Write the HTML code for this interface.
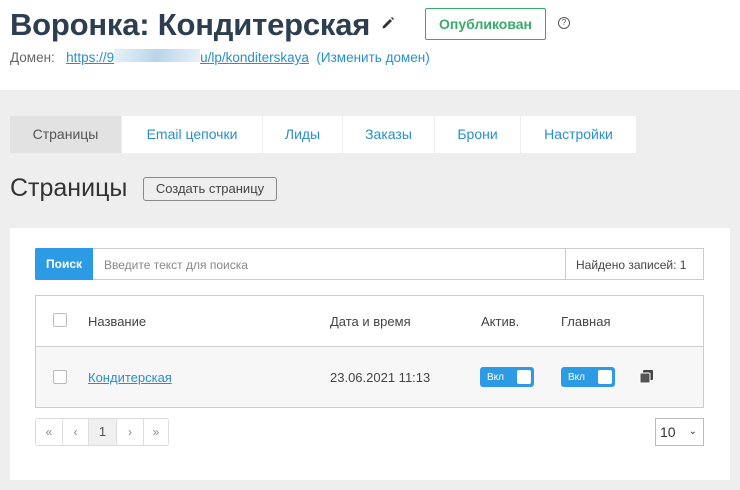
<!DOCTYPE html>
<html><head><meta charset="utf-8"><style>
*{box-sizing:border-box;margin:0;padding:0}
body{width:740px;height:490px;overflow:hidden;background:#eee;font-family:"Liberation Sans","DejaVu Sans",sans-serif;position:relative;color:#333}
.abs{position:absolute}
.top{left:0;top:0;width:740px;height:90px;background:#fff}
h1{position:absolute;left:10px;top:7px;font-size:31px;font-weight:bold;color:#2c3e50;letter-spacing:-0.2px}
a{color:#2a8fc9}
.tab{position:absolute;top:116px;height:37px;background:#fff;color:#2a8fc9;font-size:14px;line-height:37px;text-align:center}
.panel{left:10px;top:228px;width:720px;height:252px;background:#fff}
.tog{position:absolute;width:54px;height:20px;background:#2d9be3;border-radius:3px;color:#fff;font-size:10px;line-height:21px;padding-left:7px}
.tog i{position:absolute;right:3px;top:3px;width:14px;height:14px;background:#fff;border-radius:2px}
.cb{position:absolute;width:14px;height:14px;border:1px solid #bbb;border-radius:2px;background:#fff}
.pg{position:absolute;top:418px;height:28px;border:1px solid #ddd;font-size:12px;color:#888;text-align:center;line-height:26px;background:#fff}
</style></head><body>
<div class="abs top"></div>
<h1>Воронка: Кондитерская</h1>
<svg class="abs" style="left:381px;top:16px" width="14" height="14" viewBox="0 0 14 14"><path d="M2 10 L9 3 L11 5 L4 12 L1.5 12.5 Z" fill="#333"/><path d="M10 2 L11 1 L13 3 L12 4 Z" fill="#333"/></svg>
<div class="abs" style="left:425px;top:8px;width:121px;height:32px;border:1px solid #3aaa6a;border-radius:2px;color:#3aaa6a;font-size:14px;font-weight:bold;line-height:30px;text-align:center">Опубликован</div>
<div class="abs" style="left:558px;top:17px;width:12px;height:12px;border:1px solid #555;border-radius:50%;font-size:8px;line-height:10px;text-align:center;color:#555">?</div>
<div class="abs" style="left:10px;top:49px;font-size:13.5px;color:#666">Домен:&nbsp;&nbsp; <a href="#">https://9<span style="display:inline-block;width:86px;height:13px;background:linear-gradient(100deg,#e8f1f8,#b9d5ea,#e8f1f8)"></span>u/lp/konditerskaya</a>&nbsp; <span style="color:#2a8fc9">(Изменить домен)</span></div>
<div class="tab" style="left:10px;width:111px;background:#e2e2e2;color:#555">Страницы</div>
<div class="tab" style="left:122px;width:140px">Email цепочки</div>
<div class="tab" style="left:263px;width:79px">Лиды</div>
<div class="tab" style="left:343px;width:91px">Заказы</div>
<div class="tab" style="left:435px;width:85px">Брони</div>
<div class="tab" style="left:521px;width:115px">Настройки</div>
<div class="abs" style="left:10px;top:174px;font-size:25px;color:#333">Страницы</div>
<div class="abs" style="left:143px;top:177px;width:134px;height:24px;border:1px solid #888;border-radius:3px;font-size:13px;color:#444;line-height:22px;text-align:center;background:#eee">Создать страницу</div>
<div class="abs panel"></div>
<div class="abs" style="left:35px;top:248px;width:669px;height:32px;border:1px solid #ccc;background:#fff"></div>
<div class="abs" style="left:35px;top:248px;width:58px;height:32px;background:#2d9be3;color:#fff;font-weight:bold;font-size:12px;line-height:32px;text-align:center;border-radius:2px 0 0 2px">Поиск</div>
<div class="abs" style="left:104px;top:258px;font-size:12px;color:#888">Введите текст для поиска</div>
<div class="abs" style="left:565px;top:248px;width:1px;height:32px;background:#ccc"></div>
<div class="abs" style="left:576px;top:258px;font-size:12px;color:#444">Найдено записей: 1</div>
<div class="abs" style="left:35px;top:295px;width:669px;height:113px;border:1px solid #ccc;background:#fff"></div>
<div class="abs" style="left:36px;top:346px;width:667px;height:61px;background:#f7f7f7;border-top:1px solid #ccc"></div>
<div class="cb" style="left:53px;top:313px"></div>
<div class="abs" style="left:88px;top:314px;font-size:13px;color:#444">Название</div>
<div class="abs" style="left:330px;top:314px;font-size:13px;color:#444">Дата и время</div>
<div class="abs" style="left:481px;top:314px;font-size:13px;color:#444">Актив.</div>
<div class="abs" style="left:561px;top:314px;font-size:13px;color:#444">Главная</div>
<div class="cb" style="left:53px;top:370px"></div>
<div class="abs" style="left:88px;top:370px;font-size:13px"><a href="#">Кондитерская</a></div>
<div class="abs" style="left:330px;top:370px;font-size:13px;color:#444">23.06.2021 11:13</div>
<div class="tog" style="left:480px;top:367px">Вкл<i></i></div>
<div class="tog" style="left:561px;top:367px">Вкл<i></i></div>
<svg class="abs" style="left:639px;top:369px" width="15" height="15" viewBox="0 0 15 15"><rect x="4" y="1" width="10" height="10" rx="1" fill="#444"/><rect x="1" y="4" width="10" height="10" rx="1" fill="#555" stroke="#fff" stroke-width="1"/></svg>
<div class="pg" style="left:35px;width:28px;border-radius:3px 0 0 3px">«</div>
<div class="pg" style="left:62px;width:27px">‹</div>
<div class="pg" style="left:88px;width:29px;background:#f0f0f0;color:#555;font-size:13px">1</div>
<div class="pg" style="left:116px;width:28px">›</div>
<div class="pg" style="left:143px;width:26px;border-radius:0 3px 3px 0">»</div>
<div class="abs" style="left:655px;top:418px;width:49px;height:28px;border:1px solid #bbb;background:#fff;font-size:14px;line-height:26px;padding-left:4px;color:#333">10 <span style="position:absolute;right:6px;top:0;font-size:10px">&#8964;</span></div>
</body></html>
